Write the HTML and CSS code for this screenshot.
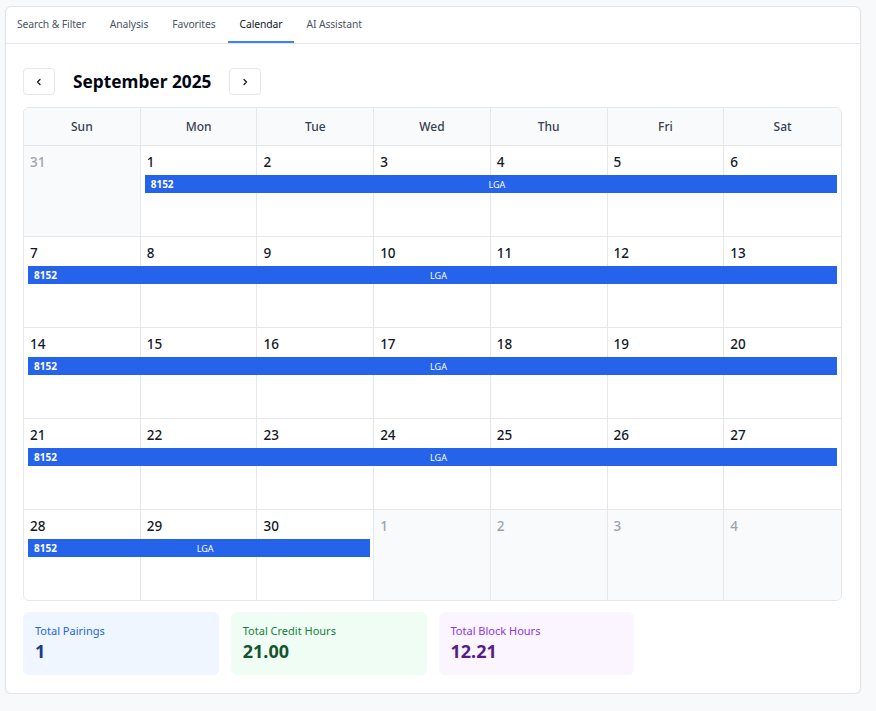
FILE: index.html
```html
<!DOCTYPE html>
<html lang="en">
<head>
<meta charset="utf-8">
<title>Calendar</title>
<link rel="stylesheet" href="styles.css">
</head>
<body>
<div class="card">
  <nav class="tabs">
    <span class="tab">Search &amp; Filter</span>
    <span class="tab">Analysis</span>
    <span class="tab">Favorites</span>
    <span class="tab active">Calendar</span>
    <span class="tab">AI Assistant</span>
  </nav>
  <div class="content">
    <div class="cal-head">
      <button class="nav-btn" aria-label="Previous month"><svg width="10" height="10" viewBox="0 0 10 10"><path d="M6 2.5 3.5 5 6 7.5" fill="none" stroke="#111827" stroke-width="1.3" stroke-linecap="round" stroke-linejoin="round"/></svg></button>
      <h2 class="month">September 2025</h2>
      <button class="nav-btn" aria-label="Next month"><svg width="10" height="10" viewBox="0 0 10 10"><path d="M4 2.5 6.5 5 4 7.5" fill="none" stroke="#111827" stroke-width="1.3" stroke-linecap="round" stroke-linejoin="round"/></svg></button>
    </div>
    <div class="calendar">
      <div class="dow">
        <div>Sun</div><div>Mon</div><div>Tue</div><div>Wed</div><div>Thu</div><div>Fri</div><div>Sat</div>
      </div>
      <div class="week">
        <div class="day other"><span>31</span></div>
        <div class="day"><span>1</span></div>
        <div class="day"><span>2</span></div>
        <div class="day"><span>3</span></div>
        <div class="day"><span>4</span></div>
        <div class="day"><span>5</span></div>
        <div class="day"><span>6</span></div>
        <div class="bar" style="grid-column: 2 / 8"><b>8152</b><span class="dest">LGA</span></div>
      </div>
      <div class="week">
        <div class="day"><span>7</span></div>
        <div class="day"><span>8</span></div>
        <div class="day"><span>9</span></div>
        <div class="day"><span>10</span></div>
        <div class="day"><span>11</span></div>
        <div class="day"><span>12</span></div>
        <div class="day"><span>13</span></div>
        <div class="bar" style="grid-column: 1 / 8"><b>8152</b><span class="dest">LGA</span></div>
      </div>
      <div class="week">
        <div class="day"><span>14</span></div>
        <div class="day"><span>15</span></div>
        <div class="day"><span>16</span></div>
        <div class="day"><span>17</span></div>
        <div class="day"><span>18</span></div>
        <div class="day"><span>19</span></div>
        <div class="day"><span>20</span></div>
        <div class="bar" style="grid-column: 1 / 8"><b>8152</b><span class="dest">LGA</span></div>
      </div>
      <div class="week">
        <div class="day"><span>21</span></div>
        <div class="day"><span>22</span></div>
        <div class="day"><span>23</span></div>
        <div class="day"><span>24</span></div>
        <div class="day"><span>25</span></div>
        <div class="day"><span>26</span></div>
        <div class="day"><span>27</span></div>
        <div class="bar" style="grid-column: 1 / 8"><b>8152</b><span class="dest">LGA</span></div>
      </div>
      <div class="week last">
        <div class="day"><span>28</span></div>
        <div class="day"><span>29</span></div>
        <div class="day"><span>30</span></div>
        <div class="day other"><span>1</span></div>
        <div class="day other"><span>2</span></div>
        <div class="day other"><span>3</span></div>
        <div class="day other"><span>4</span></div>
        <div class="bar" style="grid-column: 1 / 4"><b>8152</b><span class="dest">LGA</span></div>
      </div>
    </div>
    <div class="stats">
      <div class="stat blue"><div class="label">Total Pairings</div><div class="value">1</div></div>
      <div class="stat green"><div class="label">Total Credit Hours</div><div class="value">21.00</div></div>
      <div class="stat purple"><div class="label">Total Block Hours</div><div class="value">12.21</div></div>
    </div>
  </div>
</div>
</body>
</html>
```
FILE: styles.css
```css
* { box-sizing: border-box; }
html, body { margin: 0; padding: 0; }
body {
  background: #f8f9fa;
  font-family: "Noto Sans", "Open Sans", sans-serif;
  color: #111827;
  padding: 6px 15px 0 5px;
}
.card {
  background: #fff;
  border: 1px solid #e2e4e8;
  border-radius: 6px;
  box-shadow: 0 1px 2px rgba(0,0,0,0.06);
}
.tabs {
  display: flex;
  height: 37px;
  border-bottom: 1px solid #e5e7eb;
}
.tab {
  padding: 0 12px;
  font-size: 10.35px;
  letter-spacing: -0.1px;
  line-height: 34px;
  color: #4b5563;
  border-bottom: 2px solid transparent;
  white-space: nowrap;
}
.tab:first-child { padding-left: 11px; }
.tab.active {
  color: #111827;
  border-bottom-color: #3b82f6;
}
.content {
  padding: 24px 18px 18px 17px;
}
.cal-head {
  display: flex;
  align-items: center;
  gap: 18px;
  margin-bottom: 12px;
}
.nav-btn {
  width: 32px;
  height: 27px;
  padding: 0;
  background: #fff;
  border: 1px solid #e5e7eb;
  border-radius: 4px;
  display: flex;
  align-items: center;
  justify-content: center;
}
.month {
  margin: 0;
  font-size: 17.3px;
  font-weight: 700;
  color: #030712;
  line-height: 27px;
}
.calendar {
  border: 1px solid #e5e7eb;
  border-radius: 6px;
  overflow: hidden;
}
.dow {
  display: grid;
  grid-template-columns: repeat(7, minmax(0, 1fr));
  background: #f9fafb;
  border-bottom: 1px solid #e5e7eb;
}
.dow div {
  height: 37px;
  line-height: 37px;
  text-align: center;
  font-size: 12px;
  font-weight: 500;
  color: #374151;
  border-right: 1px solid #e5e7eb;
}
.dow div:last-child { border-right: none; }
.week {
  display: grid;
  grid-template-columns: repeat(7, minmax(0, 1fr));
  grid-template-rows: 29px 18px 1fr;
  height: 91px;
  border-bottom: 1px solid #e5e7eb;
}
.week.last { border-bottom: none; height: 90px; }
.day {
  grid-row: 1 / -1;
  border-right: 1px solid #e5e7eb;
  padding: 6px 6px 0 6px;
  font-size: 13.5px;
  font-weight: 500;
  line-height: 20px;
  color: #111827;
}
.day:nth-child(1) { grid-column: 1; }
.day:nth-child(2) { grid-column: 2; }
.day:nth-child(3) { grid-column: 3; }
.day:nth-child(4) { grid-column: 4; }
.day:nth-child(5) { grid-column: 5; }
.day:nth-child(6) { grid-column: 6; }
.day:nth-child(7) { grid-column: 7; border-right: none; }
.day.other {
  background: #f9fafb;
  color: #9ca3af;
}
.bar {
  grid-row: 2;
  margin: 0 4px;
  background: #2563eb;
  color: #fff;
  display: grid;
  grid-template-columns: 1fr auto 1fr;
  align-items: center;
  padding: 0 6px;
  height: 18px;
  z-index: 1;
}
.bar b {
  font-size: 10px;
  font-weight: 700;
}
.bar .dest {
  font-size: 9px;
  padding-left: 12px;
}
.stats {
  display: grid;
  grid-template-columns: repeat(4, 1fr);
  gap: 12px;
  margin-top: 11px;
}
.stat {
  border-radius: 6px;
  padding: 11px 12px 12px 12px;
  height: 63px;
}
.label { font-size: 11px; line-height: 16px; }
.value { font-size: 18px; font-weight: 700; line-height: 24px; }
.blue { background: #eff6ff; }
.blue .label { color: #2563eb; }
.blue .value { color: #1e3a8a; }
.green { background: #f0fdf4; }
.green .label { color: #15803d; }
.green .value { color: #14532d; }
.purple { background: #faf5ff; }
.purple .label { color: #9333ea; }
.purple .value { color: #581c87; }
```
